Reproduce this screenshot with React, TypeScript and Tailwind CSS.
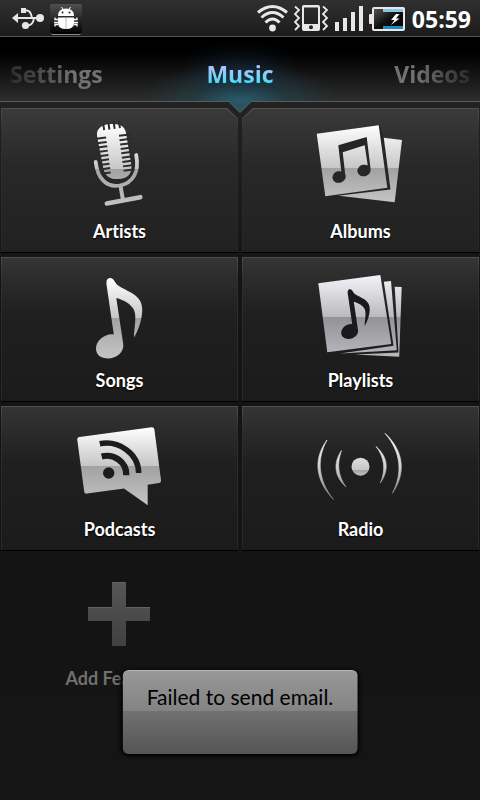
import type { ReactNode } from "react";

const NOTE =
  "M110 278 C106.500 278 106 282 106.800 286.500 L113.800 334.500 C106 333 96 340 96 348.500 C96 355 101 358.500 108 358.500 C117 358.500 124 352 123.300 344.500 L116.300 298 C124 300 131 304 134 310 C137 317 134 328 134 337.500 C139 329 142.500 318 142.200 309 C142 294 127 292 117.500 285 C114.500 282.500 114 278 110 278 Z";

function Sheen({ id, top, split, bottom, cool }: { id: string; top: number; split: number; bottom: number; cool?: boolean }) {
  const at = (split - top) / (bottom - top);
  return (
    <linearGradient id={id} gradientUnits="userSpaceOnUse" x1="0" x2="0" y1={top} y2={bottom}>
      <stop offset="0" stopColor={cool ? "#f4f4f8" : "#ffffff"} />
      <stop offset={at} stopColor={cool ? "#b9b9be" : "#c6c6c6"} />
      <stop offset={at} stopColor={cool ? "#939397" : "#a2a2a2"} />
      <stop offset="1" stopColor={cool ? "#b8b8bc" : "#c4c4c4"} />
    </linearGradient>
  );
}

function MicIcon() {
  const slots = [0, 1, 2, 3, 4, 5, 6, 7, 8];
  return (
    <svg className="mx-auto block" width="97" height="96" viewBox="71 115 97 96" aria-hidden="true">
      <defs><Sheen id="mic" top={124} split={169} bottom={206} /></defs>
      <g fill="none" stroke="url(#mic)" strokeLinecap="round">
        <path d="M95.700 162 C97.500 178 106 188 120 185.500 C133 183 139.500 172 136.200 155" strokeWidth="3.800" />
        <path d="M120.500 186 L122.800 199" strokeWidth="4" />
        <path d="M106.800 203.400 L140.300 197.200" strokeWidth="4.600" />
      </g>
      <path d="M97 136 C96 128 103 124 111 124 C119 123.500 125 126 126 133 L131.500 166 C132 174 127 179 118.500 179 C110 179.500 105 176 103.500 169 Z" fill="url(#mic)" />
      <g transform="rotate(-7.500 115 151.500)" stroke="#2c2c2c" strokeWidth="2">
        {slots.map((n) => (
          <path key={n} d={`M98 ${136.500 + n * 4.400} h10 M121 ${136.500 + n * 4.400} h11`} />
        ))}
        <path d="M107 122 v7 M112.300 122 v7 M117.600 122 v7 M122.900 122 v7" />
      </g>
    </svg>
  );
}

function AlbumsIcon() {
  return (
    <svg className="mx-auto block" width="97" height="96" viewBox="312 115 97 96" aria-hidden="true">
      <defs><Sheen id="alb" top={125} split={168.500} bottom={202} /></defs>
      <path d="M345 133 L402 140 L394.700 202.300 L339 195.700 Z" fill="url(#alb)" />
      <path d="M316.700 133.700 L380 125 L383.800 138 L390.500 189.500 L340 195.500 L325.300 197 Z" fill="#262626" />
      <path d="M316.700 133.700 L378.700 125.300 L387.300 187.700 L325.300 196.300 Z" fill="url(#alb)" />
      <g fill="#262626">
        <path d="M338.300 145.300 L366.700 137 L370.600 169 L368 167 L364.700 145.300 L342.700 152.300 L345.500 177 L341.500 173 Z" />
        <ellipse cx="339" cy="177" rx="6.700" ry="5.800" transform="rotate(-14 339 177)" />
        <ellipse cx="364" cy="170.500" rx="6.700" ry="5.800" transform="rotate(-14 364 170.500)" />
      </g>
    </svg>
  );
}

function SongsIcon() {
  return (
    <svg className="mx-auto block" width="97" height="96" viewBox="71 264 97 96" aria-hidden="true">
      <defs><Sheen id="song" top={278} split={318} bottom={358} /></defs>
      <path d={NOTE} fill="url(#song)" />
    </svg>
  );
}

function PlaylistsIcon() {
  return (
    <svg className="mx-auto block" width="97" height="96" viewBox="312 264 97 96" aria-hidden="true">
      <defs><Sheen id="list" top={275} split={317} bottom={356} cool /></defs>
      <path d="M394.700 286.700 L401.700 287 L399.200 356.700 L355 354.600 L398.500 352.500 Z" fill="url(#list)" />
      <path d="M383.800 281.700 L391 281 L396.800 350.300 L340 353.600 L393.500 345.800 Z" fill="url(#list)" />
      <path d="M318.300 283.300 L380.300 275 L391.300 344 L327.300 352.200 Z" fill="url(#list)" />
      <path d={NOTE} transform="translate(282 117.800) scale(.617)" fill="#1a1a1a" />
    </svg>
  );
}

function PodcastsIcon() {
  return (
    <svg className="mx-auto block" width="97" height="96" viewBox="71 413 97 96" aria-hidden="true">
      <defs><Sheen id="pod" top={427} split={466} bottom={505} /></defs>
      <path d="M79.500 437 L151.500 427.300 Q154 427 154.400 429.500 L161 480 Q161.300 482.600 158.800 483 L147.700 484.800 V505.300 L124 488.400 L87 493.600 Q84.500 494 84.200 491.400 L77.300 440 Q77 437.300 79.500 437 Z" fill="url(#pod)" />
      <circle cx="108.700" cy="473" r="5.700" fill="#1c1c1c" />
      <g fill="none" stroke="#1c1c1c">
        <path d="M101.700 456.500 C113 453.500 126.500 461 126.300 475.300" strokeWidth="6.200" />
        <path d="M99.800 443.800 C118 440 138.500 453 138.700 473" strokeWidth="5.600" />
      </g>
    </svg>
  );
}

function RadioIcon() {
  return (
    <svg className="mx-auto block" width="97" height="96" viewBox="312 413 97 96" aria-hidden="true">
      <defs>
        <Sheen id="dot" top={440} split={470} bottom={476} />
        <linearGradient id="wave" gradientUnits="userSpaceOnUse" x1="0" x2="0" y1="433" y2="500">
          <stop offset="0" stopColor="#ffffff" />
          <stop offset=".5" stopColor="#d0d0d0" />
          <stop offset="1" stopColor="#888888" />
        </linearGradient>
      </defs>
      <circle cx="360.500" cy="466.700" r="9" fill="url(#dot)" />
      <g fill="url(#wave)" stroke="url(#wave)" strokeWidth=".6">
        <path d="M327 440 C313 459 315 480 333.500 499.500 C318 480 316.500 459 327 440 Z" />
        <path d="M341.500 450.500 C333 463 334 476 346 487 C337.500 475 337 463 341.500 450.500 Z" />
        <path d="M376 446.500 C388 457 389.500 470 380.300 483 C386 470 384.500 457 376 446.500 Z" />
        <path d="M385 433.300 C404 451 406.500 473 392.300 493.300 C403 473 401 452 385 433.300 Z" />
      </g>
    </svg>
  );
}

function AddIcon() {
  return (
    <svg className="mx-auto block" width="97" height="96" viewBox="71 562 97 96" aria-hidden="true">
      <defs>
        <linearGradient id="plus" x1="0" x2="0" y1="0" y2="1">
          <stop offset="0" stopColor="#565656" />
          <stop offset="1" stopColor="#404040" />
        </linearGradient>
      </defs>
      <path d="M112 582 h14 v25 h24 v14 h-24 v25 h-14 v-25 h-24 v-14 h24 Z" fill="url(#plus)" />
      <path d="M112 582.500 h14 M88 607.500 h24 M126 607.500 h24" stroke="#626262" />
    </svg>
  );
}

const CUT_RIGHT = "[clip-path:polygon(0_0,calc(100%-11px)_0,100%_10px,100%_100%,0_100%)]";
const CUT_LEFT = "[clip-path:polygon(11px_0,100%_0,100%_100%,0_100%,0_10px)]";

function Tile({ label, icon, cut = "", first }: { label: string; icon: ReactNode; cut?: string; first?: boolean }) {
  const face = first
    ? "bg-linear-to-b from-[#3a3a3a] via-[#282828] via-40% to-[#212121]"
    : "bg-linear-to-b from-[#343434] via-[#1f1f1f] via-40% to-[#1b1b1b]";
  return (
    <button type="button" className={`block border-b border-black bg-linear-to-b from-[#505050] via-[#303030] via-15% to-[#272727] px-px pt-px ${cut}`}>
      <span className={`block px-1 pt-1.5 pb-[9px] ${face} ${cut}`}>
        {icon}
        <span className="mt-2 block text-center text-lg leading-6 font-bold text-white [text-shadow:0_1px_2px_#000]">{label}</span>
      </span>
    </button>
  );
}

function StatusBar() {
  return (
    <div className="flex h-[37px] items-start justify-between border-b border-[#555555] bg-linear-to-b from-[#303030] to-[#1c1c1c]">
      <svg width="90" height="36" viewBox="0 0 90 36" aria-hidden="true">
        <defs>
          <linearGradient id="bug" x1="0" x2="0" y1="0" y2="1">
            <stop offset="0" stopColor="#505050" />
            <stop offset=".55" stopColor="#242424" />
            <stop offset="1" stopColor="#000000" />
          </linearGradient>
        </defs>
        <g fill="#e6e6e6">
          <path d="M12 18 L18 13 V23 Z" />
          <path d="M17 17 H37 V19 H17 Z" />
          <circle cx="40" cy="18" r="4" />
          <rect x="21" y="8" width="5" height="5" />
          <circle cx="25.500" cy="25.500" r="3.600" />
          <path d="M25 10.500 H27 Q31 11 32 18 M28 25.500 Q33 25 34 18" fill="none" stroke="#e6e6e6" strokeWidth="1.800" />
        </g>
        <rect x="50" y="4" width="32" height="30" rx="2" fill="url(#bug)" />
        <path d="M51 33.500 Q51.500 34.500 53 34.500 H79 Q80.500 34.500 81 33.500" stroke="#8a8a8a" fill="none" />
        <g fill="#ffffff">
          <path d="M58 16 Q58 8.500 66 8.500 Q74 8.500 74 16 Z" />
          <path d="M61.500 7 L63 9.500 M70.500 7 L69 9.500" stroke="#ffffff" />
          <path d="M58 17.500 H74 V23 Q74 29 66 29 Q58 29 58 23 Z" />
          <path d="M58 19.500 H55 V17.500 M58 22.500 H54 M58 24.500 H55 V26.500 M74 19.500 H77 V17.500 M74 22.500 H78 M74 24.500 H77 V26.500" fill="none" stroke="#ffffff" strokeWidth="1.300" />
        </g>
        <circle cx="62.500" cy="12.500" r="1" fill="#222222" />
        <circle cx="69.500" cy="12.500" r="1" fill="#222222" />
        <path d="M66 18 V29" stroke="#bbbbbb" />
      </svg>
      <div className="flex items-start gap-1 pr-[9px]">
        <svg width="158" height="36" viewBox="250 0 158 36" aria-hidden="true">
          <defs>
            <linearGradient id="cell" x1="0" x2="1" y1="0" y2="1">
              <stop offset="0" stopColor="#5a5a5a" />
              <stop offset=".5" stopColor="#101010" />
              <stop offset="1" stopColor="#000000" />
            </linearGradient>
          </defs>
          <circle cx="272.500" cy="28" r="3.400" fill="#e8e8e8" />
          <g fill="none" stroke="#e8e8e8" strokeWidth="3">
            <path d="M265.500 22.500 Q272.500 15.500 279.500 22.500" />
            <path d="M261.500 17.500 Q272.500 7.500 283.500 17.500" />
            <path d="M258 12.500 Q272.500 0.500 287 12.500" />
          </g>
          <path d="M304 5 H318 Q320 5 320 7 V29 Q320 31 318 31 H304 Q302 31 302 29 V7 Q302 5 304 5 Z M304 7.500 V24 H318 V7.500 Z" fill="#e8e8e8" fillRule="evenodd" />
          <circle cx="311" cy="27.300" r="2" fill="#222222" />
          <path d="M295 6.500 L299 10 L295 14 L299 18 L295 22 L299 26 L295 30 M323 6.500 L327 10 L323 14 L327 18 L323 22 L327 26 L323 30" fill="none" stroke="#e8e8e8" strokeWidth="1.800" />
          <path d="M335 22 h4 v9 h-4 Z M343 18 h4 v13 h-4 Z M351 12 h4 v19 h-4 Z M359 6 h4 v25 h-4 Z" fill="#e8e8e8" />
          <path d="M369 15 Q369 14 370 14 H373 V24 H370 Q369 24 369 23 Z" fill="#e8e8e8" />
          <rect x="373" y="8" width="31" height="22" rx="1" fill="url(#cell)" stroke="#e8e8e8" strokeWidth="2" />
          <rect x="383" y="9" width="20" height="3" fill="#86c8ea" />
          <rect x="383" y="26" width="20" height="3" fill="#1c8ac4" />
          <path d="M396 14 L391 20 H394.500 L391 25 L399.500 18.500 H396 L399.500 14 Z" fill="#ffffff" />
        </svg>
        <time className="font-['Open_Sans',sans-serif] text-[23px] leading-[38px] font-bold text-white">05:59</time>
      </div>
    </div>
  );
}

function TabBar() {
  return (
    <nav className="relative grid grid-cols-3 border-b border-[#5a5a5a] bg-[radial-gradient(ellipse_60px_34px_at_50%_58%,#16304a80,transparent),radial-gradient(ellipse_100px_40px_at_50%_100%,#2b6472,#22485480_45%,transparent),linear-gradient(#000000_25%,#2d2d2d)] px-2.5 pt-[21px] pb-[11px] font-['Open_Sans',sans-serif] text-[23px] leading-8 font-bold">
      <button type="button" className="justify-self-start bg-linear-to-r from-[#2c2c2c] to-[#727272] to-70% bg-clip-text text-transparent">Settings</button>
      <button type="button" aria-current="page" className="justify-self-center bg-linear-to-b from-[#a4c4ff] from-30% to-[#35e0fa] to-80% bg-clip-text text-transparent">Music</button>
      <button type="button" className="justify-self-end bg-linear-to-r from-[#727272] from-30% to-[#2c2c2c] bg-clip-text text-transparent">Videos</button>
      <svg className="absolute top-full left-1/2 -translate-x-1/2" width="24" height="12" viewBox="0 0 24 12" aria-hidden="true">
        <path d="M1 0 H23 L12 11 Z" fill="#2a5560" />
        <path d="M1 0.500 L12 11.500 L23 0.500" fill="none" stroke="#5d7075" />
      </svg>
    </nav>
  );
}

export default function App() {
  return (
    <div className="relative min-h-screen bg-[#151515] font-[Lato,sans-serif] [font-variant-ligatures:none]">
      <StatusBar />
      <TabBar />
      <main className="grid grid-cols-2 gap-1 bg-linear-to-b from-[#222222] to-[#141414] to-30% px-px pt-1.5">
        <Tile first label="Artists" icon={<MicIcon />} cut={CUT_RIGHT} />
        <Tile first label="Albums" icon={<AlbumsIcon />} cut={CUT_LEFT} />
        <Tile label="Songs" icon={<SongsIcon />} />
        <Tile label="Playlists" icon={<PlaylistsIcon />} />
        <Tile label="Podcasts" icon={<PodcastsIcon />} />
        <Tile label="Radio" icon={<RadioIcon />} />
        <button type="button" className="block pt-[7px] pb-2">
          <AddIcon />
          <span className="mt-2 block text-center text-lg leading-6 font-bold text-[#707070]">Add Featured</span>
        </button>
      </main>
      <div role="status" className="absolute bottom-[46px] left-1/2 h-[84px] -translate-x-1/2 rounded-md border-t border-[#b5b5b5] bg-[linear-gradient(#989898,#838383_48%,#717171_48%,#555555)] px-6 pt-[13px] text-[21px] leading-[26px] whitespace-nowrap text-black shadow-[0_1px_4px_1px_#000000]">
        Failed to send email.
      </div>
    </div>
  );
}
